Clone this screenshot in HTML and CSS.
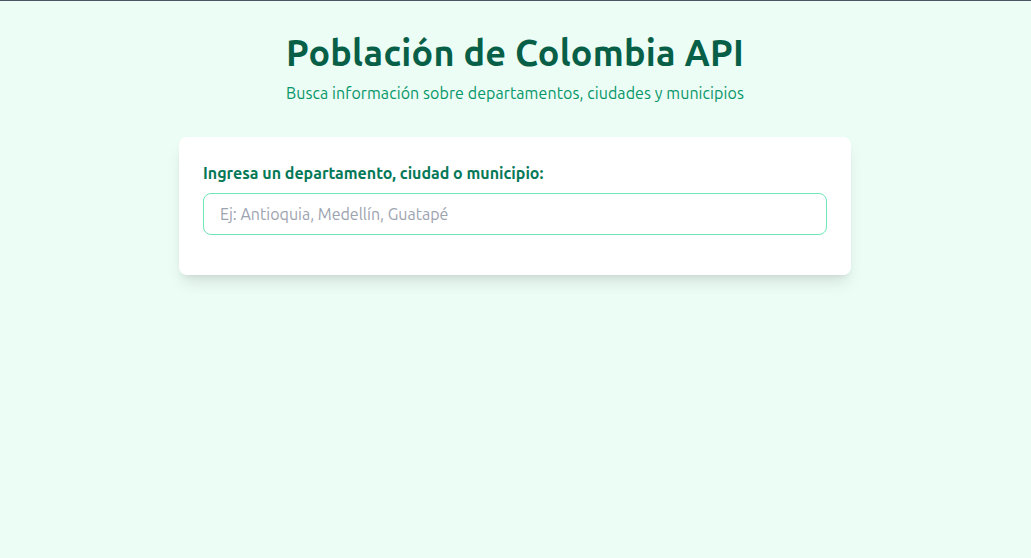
FILE: index.html
```html
<!DOCTYPE html>
<html lang="es">
<head>
<meta charset="utf-8">
<title>Población de Colombia API</title>
<link rel="stylesheet" href="styles.css">
</head>
<body>
<div class="page">
  <header class="header">
    <h1 class="title">Población de Colombia API</h1>
    <p class="subtitle">Busca información sobre departamentos, ciudades y municipios</p>
  </header>
  <main class="card">
    <label class="label" for="q">Ingresa un departamento, ciudad o municipio:</label>
    <div class="field">
      <input id="q" class="input" type="text" placeholder="Ej: Antioquia, Medellín, Guatapé">
    </div>
  </main>
</div>
</body>
</html>
```
FILE: styles.css
```css
* { box-sizing: border-box; }
html, body { margin: 0; padding: 0; }
body {
  background: #ecfdf5;
  border-top: 1px solid #4b5563;
  min-height: 558px;
  font-family: "Ubuntu", "Noto Sans", sans-serif;
}
.page {
  padding: 32px 16px 0 15px;
}
.header { text-align: center; margin-bottom: 32px; }
.title {
  margin: 0;
  font-size: 36px;
  line-height: 40px;
  font-weight: 700;
  letter-spacing: 0.22px;
  color: #065f46;
}
.subtitle {
  margin: 8px 0 0;
  font-size: 16px;
  line-height: 24px;
  letter-spacing: 0.08px;
  color: #059669;
}
.card {
  display: block;
  max-width: 672px;
  margin: 0 auto;
  background: #fff;
  border-radius: 8px;
  padding: 24px;
  box-shadow: 0 10px 15px -3px rgba(0,0,0,0.1), 0 4px 6px -4px rgba(0,0,0,0.1);
}
.label {
  display: block;
  font-size: 16px;
  line-height: 24px;
  font-weight: 600;
  color: #047857;
  margin-bottom: 8px;
}
.field { margin-bottom: 16px; }
.input {
  display: block;
  width: 100%;
  height: 42px;
  padding: 8px 16px;
  border: 1px solid #6ee7b7;
  border-radius: 8px;
  font-family: inherit;
  font-size: 16px;
  line-height: 24px;
  color: #111827;
  outline: none;
}
.input::placeholder { color: #9ca3af; }
```
